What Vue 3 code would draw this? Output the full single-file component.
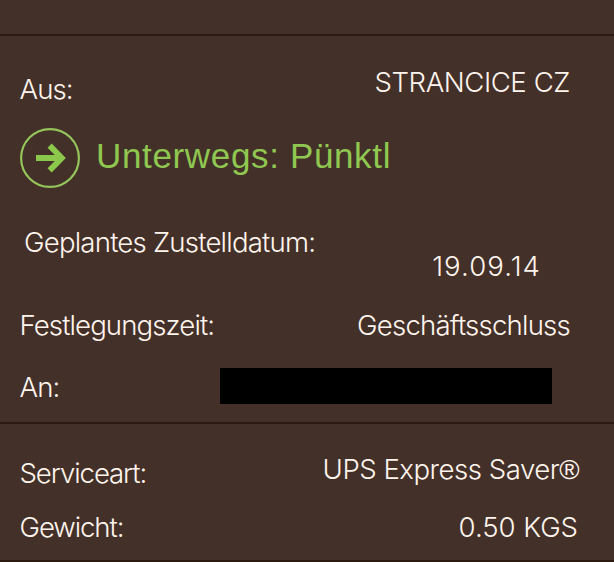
<template>
  <div class="tracking">
    <div class="spacer"></div>

    <section class="shipment">
      <div class="row from">
        <span class="label">Aus:</span>
        <span class="value">STRANCICE CZ</span>
      </div>

      <div class="status">
        <svg class="status-icon" viewBox="0 0 60 60">
          <circle cx="30" cy="30" r="28.9" />
          <path class="shaft" d="M16 30H41" />
          <path class="head" d="M29.6 17.6L41.8 30L29.6 42.4" />
        </svg>
        <span class="status-text">Unterwegs: Pünktl</span>
      </div>

      <div class="row planned">
        <span class="label">Geplantes Zustelldatum:</span>
        <span class="value">19.09.14</span>
      </div>

      <div class="row time">
        <span class="label">Festlegungszeit:</span>
        <span class="value">Geschäftsschluss</span>
      </div>

      <div class="row to">
        <span class="label">An:</span>
        <span class="redacted"></span>
      </div>
    </section>

    <section class="service">
      <div class="row kind">
        <span class="label">Serviceart:</span>
        <span class="value">UPS Express Saver<span class="reg">®</span></span>
      </div>

      <div class="row weight">
        <span class="label">Gewicht:</span>
        <span class="value">0.50 KGS</span>
      </div>
    </section>
  </div>
</template>

<script setup>
</script>

<style>
body {
  margin: 0;
  background: #433028;
}
</style>

<style scoped>
.tracking {
  width: 614px;
  height: 562px;
  overflow: hidden;
  box-sizing: border-box;
  background: #433028;
  color: #fff5ee;
  font-family: Inter, "Liberation Sans", sans-serif;
  font-size: 27.6px;
  font-weight: 300;
  line-height: 34px;
  white-space: nowrap;
}

.spacer {
  height: 34px;
  border-bottom: 2px solid #2c1a10;
}

.shipment {
  height: 386px;
  border-bottom: 2px solid #2c1a10;
}

.service {
  height: 136px;
  border-bottom: 2px solid #2c1a10;
}

.row {
  display: flex;
  justify-content: space-between;
  align-items: flex-start;
  padding-left: 19.5px;
  letter-spacing: -0.9px;
}

.from {
  padding-top: 29px;
  padding-right: 44px;
}

.from .label {
  padding-top: 7px;
}

.from .value {
  letter-spacing: -0.45px;
}

.status {
  display: flex;
  align-items: center;
  height: 60px;
  margin-top: 22px;
  padding-left: 20px;
  color: #8fc751;
}

.status-icon {
  width: 60px;
  height: 60px;
  fill: none;
}

.status-icon circle {
  stroke: #94c45a;
  stroke-width: 2.2;
}

.status-icon .shaft {
  stroke: #8cc84b;
  stroke-width: 6;
}

.status-icon .head {
  stroke: #8cc84b;
  stroke-width: 5.8;
}

.status-text {
  margin-left: 16px;
  padding-bottom: 4px;
  font-family: "Liberation Sans", sans-serif;
  font-size: 35px;
  font-weight: 400;
  letter-spacing: 0.65px;
}

.planned {
  padding: 37px 73px 0 24px;
  letter-spacing: -0.8px;
}

.planned .value {
  padding-top: 24px;
  letter-spacing: 1.05px;
}

.time {
  padding-top: 25px;
  padding-right: 44px;
}

.time .value {
  letter-spacing: -0.8px;
}

.to {
  padding-top: 26px;
  padding-right: 62px;
}

.to .label {
  padding-top: 2px;
}

.redacted {
  width: 332px;
  height: 36px;
  background: #000;
}

.kind {
  padding-top: 28px;
  padding-right: 35px;
  letter-spacing: -1.1px;
}

.kind .label {
  padding-top: 4px;
}

.kind .value {
  letter-spacing: -0.5px;
}

.reg {
  font-family: "Liberation Sans", sans-serif;
}

.weight {
  padding-top: 20px;
  padding-right: 36px;
  letter-spacing: -1.1px;
}

.weight .value {
  letter-spacing: -0.05px;
}
</style>
